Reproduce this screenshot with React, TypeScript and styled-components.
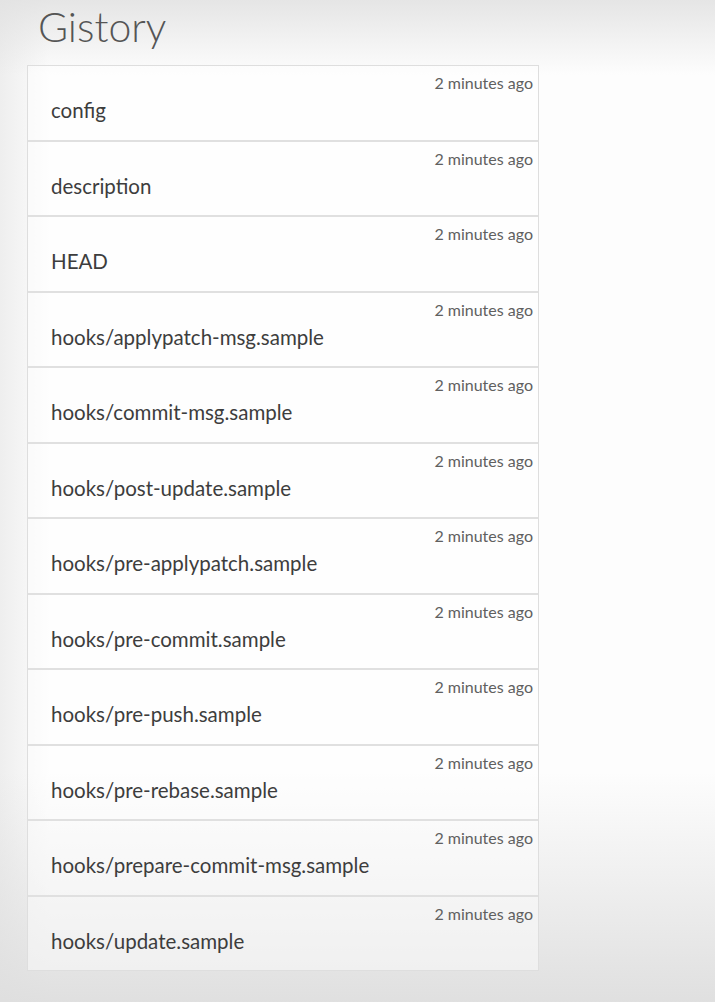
import React from 'react';
import styled, { createGlobalStyle } from 'styled-components';

const GlobalStyle = createGlobalStyle`
  html, body {
    margin: 0;
    padding: 0;
  }
  body {
    min-height: 1002px;
    font-family: Lato, "Open Sans", sans-serif;
    background:
      linear-gradient(to bottom, rgba(225, 225, 225, 0.85) 0px, rgba(255, 255, 255, 0) 75px),
      linear-gradient(to top, rgba(222, 222, 222, 0.95) 0px, rgba(255, 255, 255, 0) 230px),
      linear-gradient(to right, rgba(228, 228, 228, 0.6) 0px, rgba(255, 255, 255, 0) 50px),
      #fdfdfd;
  }
`;

const Page = styled.div`
  padding: 3px 0 0 27px;
`;

const Title = styled.h1`
  margin: 0 0 14px 11px;
  font-size: 41px;
  line-height: 48px;
  font-weight: 300;
  color: #555;
`;

const List = styled.ul`
  list-style: none;
  margin: 0;
  padding: 0;
  width: 510px;
  border: 1px solid #dedede;
`;

const Row = styled.li<{ last?: boolean }>`
  display: flex;
  flex-direction: column;
  height: 73.5px;
  box-sizing: content-box;
  border-bottom: ${({ last }) => (last ? 'none' : '2px solid #e0e0e0')};
  background: rgba(255, 255, 255, 0.45);
`;

const Time = styled.span`
  align-self: flex-end;
  padding: 8px 5px 0 0;
  font-size: 16px;
  line-height: 18px;
  color: #606060;
`;

const Name = styled.span`
  margin-top: 6px;
  padding-left: 23px;
  font-size: 20.5px;
  line-height: 24px;
  color: #3d3d3d;
`;

const files = [
  'config',
  'description',
  'HEAD',
  'hooks/applypatch-msg.sample',
  'hooks/commit-msg.sample',
  'hooks/post-update.sample',
  'hooks/pre-applypatch.sample',
  'hooks/pre-commit.sample',
  'hooks/pre-push.sample',
  'hooks/pre-rebase.sample',
  'hooks/prepare-commit-msg.sample',
  'hooks/update.sample',
];

const App = () => {
  return (
    <>
      <GlobalStyle />
      <Page>
        <Title>Gistory</Title>
        <List>
          {files.map((file, i) => (
            <Row key={file} last={i === files.length - 1}>
              <Time>2 minutes ago</Time>
              <Name>{file}</Name>
            </Row>
          ))}
        </List>
      </Page>
    </>
  );
};

export default App;
